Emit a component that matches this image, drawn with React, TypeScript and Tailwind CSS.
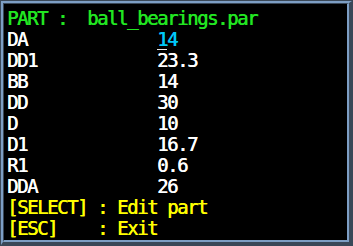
const ROWS: [string, string][] = [
  ['DA', '14'],
  ['DD1', '23.3'],
  ['BB', '14'],
  ['DD', '30'],
  ['D', '10'],
  ['D1', '16.7'],
  ['R1', '0.6'],
  ['DDA', '26'],
];

export default function App() {
  return (
    <div className="w-[353px] h-[246px] bg-[#3a4858] p-px">
      <div className="h-full border-t-2 border-l-2 border-b-[3px] border-r-[3px] border-t-[#7d9ec4] border-l-[#7d9ec4] border-b-[#3a4858] border-r-[#3a4858]">
        <div className="h-full border-t border-l border-b-[2px] border-r-[2px] border-t-[#3a4858] border-l-[#3a4858] border-b-[#7d9ec4] border-r-[#7d9ec4] bg-black">
          <div
            className="pt-1 pl-[3px] text-[19px] leading-[21px] tracking-[-1.44px] whitespace-pre [text-shadow:0.4px_0_0_currentColor]"
            style={{ fontFamily: '"DejaVu Sans Mono", monospace' }}
          >
            <div className="text-[#22e622]">PART :  ball_bearings.par</div>
            {ROWS.map(([k, v], i) => (
              <div key={k} className="text-white">
                {k.padEnd(15, ' ')}
                {i === 0 ? (
                  <span className="relative text-[#00c8f8]">
                    {v}
                    <span className="absolute left-0 bottom-0 w-[10px] h-px bg-[#e8e8e8]" />
                  </span>
                ) : (
                  v
                )}
              </div>
            ))}
            <div className="text-[#ffff00]">[SELECT] : Edit part</div>
            <div className="text-[#ffff00]">[ESC]    : Exit</div>
          </div>
        </div>
      </div>
    </div>
  );
}
